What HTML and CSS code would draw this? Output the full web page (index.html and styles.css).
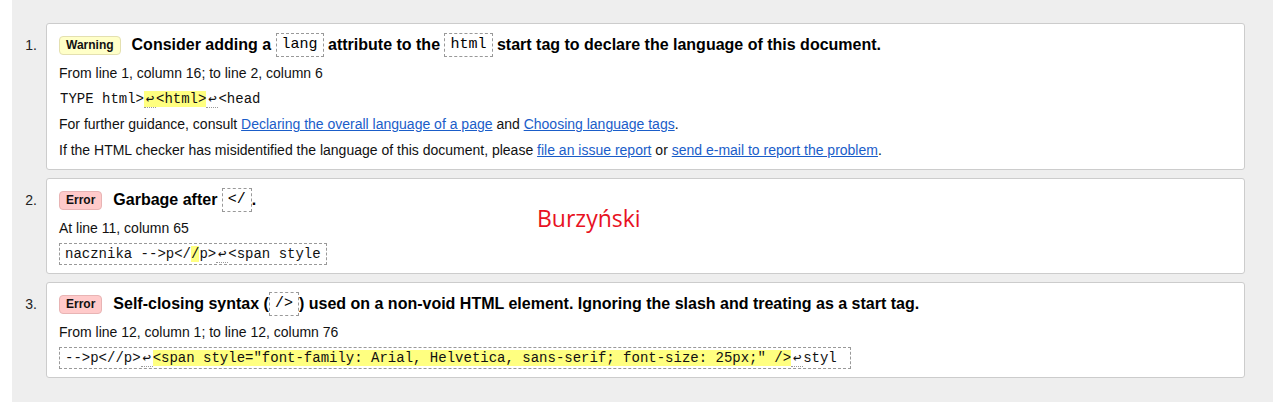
FILE: index.html
```html
<!DOCTYPE html>
<html lang="en">
<head>
<meta charset="utf-8">
<title>Messages</title>
<link rel="stylesheet" href="styles.css">
</head>
<body>
<div class="page">
  <ol class="messages">
    <li class="msg">
      <div class="card info">
        <p class="title"><span class="badge warning">Warning</span><span class="text">Consider adding a <code>lang</code> attribute to the <code>html</code> start tag to declare the language of this document.</span></p>
        <p class="loc">From line 1, column 16; to line 2, column 6</p>
        <p class="extract plain"><code>TYPE html&gt;<b><span class="lf">↩</span>&lt;html&gt;</b><span class="lf">↩</span>&lt;head</code></p>
        <p>For further guidance, consult <a href="#">Declaring the overall language of a page</a> and <a href="#">Choosing language tags</a>.</p>
        <p>If the HTML checker has misidentified the language of this document, please <a href="#">file an issue report</a> or <a href="#">send e-mail to report the problem</a>.</p>
      </div>
    </li>
    <li class="msg">
      <div class="card">
        <p class="title"><span class="badge error">Error</span><span class="text">Garbage after <code>&lt;/</code>.</span></p>
        <p class="loc">At line 11, column 65</p>
        <p class="extract"><code>nacznika --&gt;p&lt;/<b>/</b>p&gt;<span class="lf">↩</span>&lt;span style</code></p>
      </div>
    </li>
    <li class="msg">
      <div class="card">
        <p class="title"><span class="badge error">Error</span><span class="text">Self-closing syntax (<code>/&gt;</code>) used on a non-void HTML element. Ignoring the slash and treating as a start tag.</span></p>
        <p class="loc">From line 12, column 1; to line 12, column 76</p>
        <p class="extract"><code>--&gt;p&lt;//p&gt;<span class="lf">↩</span><b>&lt;span style="font-family: Arial, Helvetica, sans-serif; font-size: 25px;" /&gt;</b><span class="lf">↩</span>styl </code></p>
      </div>
    </li>
  </ol>
</div>
<div class="stamp">Burzyński</div>
</body>
</html>
```

FILE: styles.css
```css
html, body {
  margin: 0;
  padding: 0;
  background: #fff;
}

body {
  position: relative;
  font-family: "Liberation Sans", Arial, sans-serif;
  font-size: 14px;
  color: #111;
}

.page {
  margin-left: 12px;
  background: #eeeeee;
  min-height: 402px;
  padding: 23px 28px 0 0;
  box-sizing: border-box;
}

.messages {
  list-style: none;
  margin: 0;
  padding: 0;
  counter-reset: msg;
}

.msg {
  display: flex;
  counter-increment: msg;
  margin-bottom: 8px;
}

.msg::before {
  content: counter(msg) ".";
  flex: 0 0 34px;
  box-sizing: border-box;
  padding: 10px 9px 0 0;
  text-align: right;
  line-height: 24px;
  color: #222;
}

.card {
  flex: 1;
  background: #fff;
  border: 1px solid #cccccc;
  border-radius: 3px;
  padding: 9px 12px 8px;
  min-width: 0;
}

.card.info {
  padding-bottom: 9px;
}

.card p {
  margin: 6px 0 0;
  line-height: 20px;
}

.card p.title {
  margin: 0;
  display: flex;
  align-items: center;
  gap: 11px;
  line-height: 24px;
  height: 24px;
  font-size: 16px;
  font-weight: bold;
  color: #000;
}

.badge {
  display: inline-block;
  font-size: 12px;
  line-height: 17px;
  font-weight: bold;
  padding: 0 6px;
  border-radius: 4px;
  color: #111;
}

.badge.warning {
  background: #ffffc8;
  border: 1px solid #e4e0b0;
}

.badge.error {
  background: #ffcaca;
  border: 1px solid #e8b4b4;
}

.title code {
  display: inline-block;
  vertical-align: top;
  font-family: "Liberation Mono", "Courier New", monospace;
  font-size: 15px;
  font-weight: normal;
  line-height: 22px;
  padding: 0 5px;
  border: 1px dashed #999;
}

.card p.extract {
  margin-top: 5px;
}

.extract code {
  display: block;
  width: fit-content;
  font-family: "Liberation Mono", "Courier New", "DejaVu Sans Mono", monospace;
  font-size: 14px;
  line-height: 18px;
  padding: 1px 5px;
  border: 1px dashed #999;
  color: #111;
  white-space: pre;
}

.card p.extract.plain {
  margin-top: 8px;
}

.extract.plain code {
  border: 0;
  padding: 0 1px;
  line-height: 16px;
}

.extract b {
  font-weight: normal;
  background: #ffff80;
}

.lf {
  display: inline-block;
  width: 12px;
  text-align: center;
  line-height: 15px;
  border-bottom: 1px dotted #999;
}

a {
  color: #1a5dc9;
  text-decoration: underline;
}

.stamp {
  position: absolute;
  left: 537px;
  top: 203px;
  font-family: "Open Sans", "Noto Sans", sans-serif;
  font-size: 23px;
  line-height: 30px;
  color: #e81123;
}
```
